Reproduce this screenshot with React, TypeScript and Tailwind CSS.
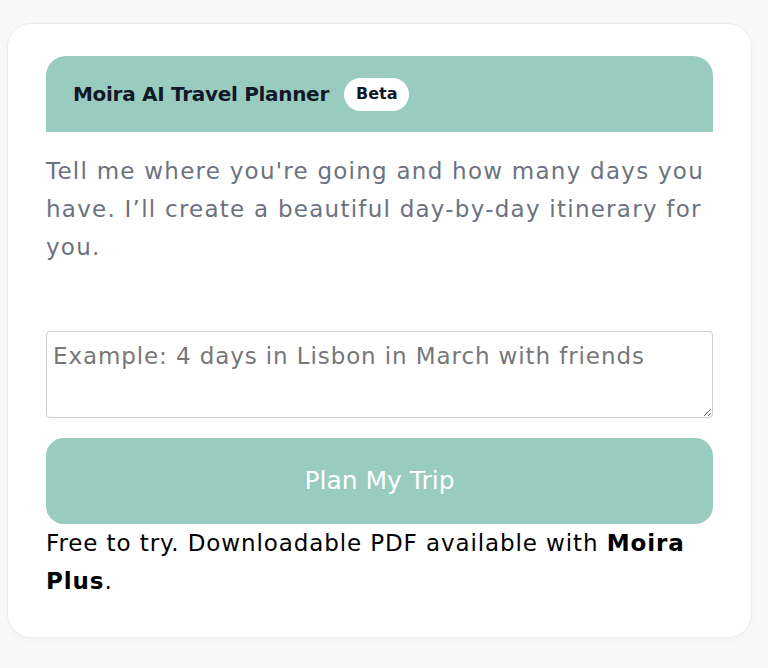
export default function App() {
  return (
    <div className="min-h-[668px] bg-[#f9f9f9] pt-[23px] pl-[7px]" style={{ fontFamily: "'DejaVu Sans', 'Noto Sans', sans-serif" }}>
      <div className="w-[745px] h-[615px] rounded-[24px] border border-[#ececec] bg-white px-[38px] pt-[32px] shadow-[0_2px_6px_rgba(0,0,0,0.03)]">
        {/* header */}
        <div className="h-[76px] rounded-t-[20px] bg-[#99cbbf] flex items-center pl-[27px] gap-[15px]">
          <span className="text-[20px] font-bold tracking-[-0.3px] text-[#111827]">Moira AI Travel Planner</span>
          <span className="h-[33px] px-[12px] rounded-full bg-white flex items-center text-[16px] font-bold text-[#111827]">Beta</span>
        </div>

        <p className="mt-[20px] text-[23px] leading-[38px] tracking-[1.25px] text-[#6b7280]">
          Tell me where you're going and how many days you have. I’ll create a beautiful day-by-day itinerary for you.
        </p>

        <textarea
          className="mt-[65px] block w-full h-[87px] rounded-[4px] border border-[#cfcfcf] px-[6px] py-[8px] text-[23px] leading-[32px] tracking-[0.9px] placeholder:text-[#777] outline-none"
          placeholder="Example: 4 days in Lisbon in March with friends"
        />

        <button className="mt-[20px] w-full h-[86px] rounded-[18px] bg-[#99cbbf] text-white text-[25px]">
          Plan My Trip
        </button>

        <p className="text-[23px] leading-[38px] tracking-[0.9px] text-black">
          Free to try. Downloadable PDF available with <b className="font-bold">Moira Plus</b>.
        </p>
      </div>
    </div>
  );
}
